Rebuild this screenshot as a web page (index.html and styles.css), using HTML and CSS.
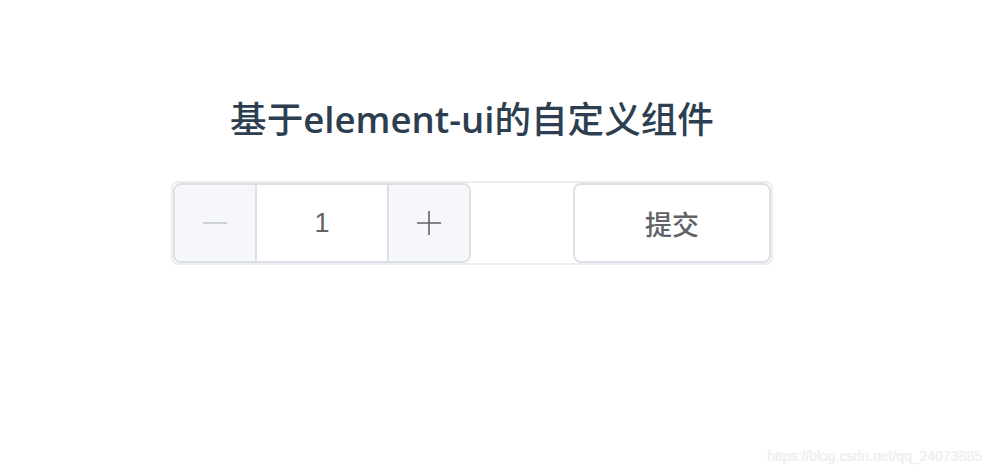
FILE: index.html
```html
<!DOCTYPE html>
<html lang="zh">
<head>
<meta charset="utf-8">
<title>基于element-ui的自定义组件</title>
<link rel="stylesheet" href="styles.css">
</head>
<body>
<div class="app">
  <h1 class="title">基于<span class="latin">element-ui</span>的自定义组件</h1>
  <div class="form">
    <div class="input-number">
      <span class="btn btn-minus disabled">
        <svg width="26" height="26" viewBox="0 0 26 26"><path d="M1 13H25" stroke="currentColor" stroke-width="1.6"/></svg>
      </span>
      <span class="value">1</span>
      <span class="btn btn-plus">
        <svg width="26" height="26" viewBox="0 0 26 26"><path d="M1 13H25M13 1V25" stroke="currentColor" stroke-width="1.6"/></svg>
      </span>
    </div>
    <button class="submit">提交</button>
  </div>
</div>
<div class="watermark">https://blog.csdn.net/qq_24073885</div>
</body>
</html>
```

FILE: styles.css
```css
html, body {
  margin: 0;
  padding: 0;
  background: #ffffff;
  width: 990px;
  height: 474px;
  overflow: hidden;
  position: relative;
}
.app {
  width: 944px;
  display: flex;
  flex-direction: column;
  align-items: center;
  padding-top: 95px;
  font-family: "Noto Sans CJK SC", sans-serif;
  color: #2c3e50;
}
.title {
  margin: 0;
  font-family: "Noto Sans CJK SC", sans-serif;
  font-size: 36.6px;
  line-height: 46px;
  font-weight: 500;
  letter-spacing: 0;
}
.title .latin {
  font-family: "Open Sans", sans-serif;
  font-weight: 600;
}
.form {
  margin-top: 39px;
  display: flex;
  justify-content: space-between;
  width: 598px;
  height: 80px;
  border: 2px solid #ebedf0;
  border-radius: 7px;
}
.input-number {
  display: flex;
  width: 298px;
  height: 80px;
  box-sizing: border-box;
  border: 2px solid #dcdfe6;
  border-radius: 8px;
  overflow: hidden;
}
.btn {
  flex: none;
  display: flex;
  align-items: center;
  justify-content: center;
  background: #f5f7fa;
  color: #606266;
  width: 80px;
}
.btn.disabled {
  color: #c0c4cc;
}
.btn-minus {
  border-right: 2px solid #dcdfe6;
}
.btn-plus {
  border-left: 2px solid #dcdfe6;
}
.value {
  flex: 1;
  display: flex;
  align-items: center;
  justify-content: center;
  font-family: "Liberation Sans", Arial, sans-serif;
  font-size: 27px;
  color: #606266;
  background: #fff;
}
.submit {
  width: 198px;
  height: 80px;
  box-sizing: border-box;
  border: 2px solid #dcdfe6;
  border-radius: 8px;
  background: #fff;
  color: #606266;
  font-family: "Noto Sans CJK SC", sans-serif;
  font-size: 27px;
  font-weight: 500;
  padding: 0;
  cursor: pointer;
}
.watermark {
  position: absolute;
  right: 8px;
  bottom: 10px;
  font-family: "Liberation Sans", Arial, sans-serif;
  font-size: 14px;
  color: #f2f2f2;
  text-shadow: 0 0 1px #e0e0e0;
}
```
